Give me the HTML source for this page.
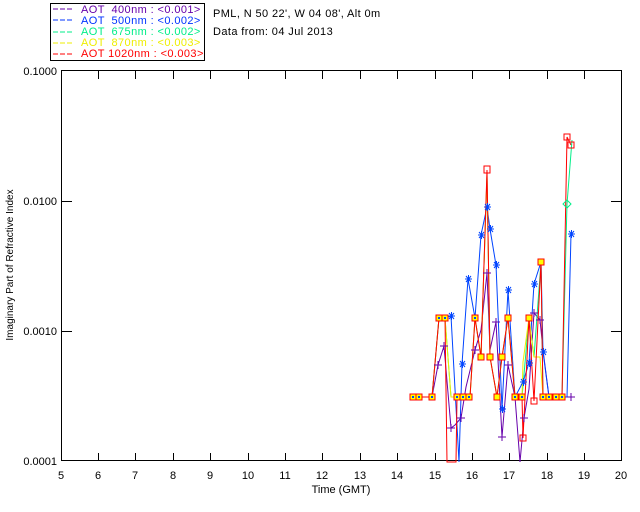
<!DOCTYPE html>
<html><head><style>
html,body{margin:0;padding:0;background:#fff;}
svg{display:block;font-family:"Liberation Sans",sans-serif;}
</style></head><body>
<svg width="640" height="512" viewBox="0 0 640 512" xmlns="http://www.w3.org/2000/svg">
<rect width="640" height="512" fill="#fff"/>
<rect x="50.5" y="3.5" width="154" height="57" fill="none" stroke="#000"/>
<g font-size="11" letter-spacing="0.4">
<line x1="53" y1="9" x2="74" y2="9" stroke="#6600aa" stroke-dasharray="5,2"/>
<text x="81" y="13" fill="#6600aa" xml:space="preserve">AOT  400nm : &lt;0.001&gt;</text>
<line x1="53" y1="20" x2="74" y2="20" stroke="#0033ff" stroke-dasharray="5,2"/>
<text x="81" y="24" fill="#0033ff" xml:space="preserve">AOT  500nm : &lt;0.002&gt;</text>
<line x1="53" y1="32" x2="74" y2="32" stroke="#00ee88" stroke-dasharray="5,2"/>
<text x="81" y="35" fill="#00ee88" xml:space="preserve">AOT  675nm : &lt;0.002&gt;</text>
<line x1="53" y1="43" x2="74" y2="43" stroke="#eeee00" stroke-dasharray="5,2"/>
<text x="81" y="46" fill="#eeee00" xml:space="preserve">AOT  870nm : &lt;0.003&gt;</text>
<line x1="53" y1="54" x2="74" y2="54" stroke="#ff0000" stroke-dasharray="5,2"/>
<text x="81" y="57" fill="#ff0000" xml:space="preserve">AOT 1020nm : &lt;0.003&gt;</text>
<text x="213" y="17" fill="#000">PML, N 50 22', W 04 08', Alt 0m</text>
<text x="213" y="35" fill="#000">Data from: 04 Jul 2013</text>
</g>
<rect x="61.5" y="70.5" width="560" height="390" fill="none" stroke="#000"/>
<g stroke="#000">
<line x1="98.5" y1="461" x2="98.5" y2="453"/><line x1="135.5" y1="461" x2="135.5" y2="453"/>
<line x1="173.5" y1="461" x2="173.5" y2="453"/><line x1="210.5" y1="461" x2="210.5" y2="453"/>
<line x1="248.5" y1="461" x2="248.5" y2="453"/><line x1="285.5" y1="461" x2="285.5" y2="453"/>
<line x1="322.5" y1="461" x2="322.5" y2="453"/><line x1="360.5" y1="461" x2="360.5" y2="453"/>
<line x1="397.5" y1="461" x2="397.5" y2="453"/><line x1="435.5" y1="461" x2="435.5" y2="453"/>
<line x1="472.5" y1="461" x2="472.5" y2="453"/><line x1="509.5" y1="461" x2="509.5" y2="453"/>
<line x1="547.5" y1="461" x2="547.5" y2="453"/><line x1="584.5" y1="461" x2="584.5" y2="453"/>
<line x1="98.5" y1="71" x2="98.5" y2="79"/><line x1="135.5" y1="71" x2="135.5" y2="79"/>
<line x1="173.5" y1="71" x2="173.5" y2="79"/><line x1="210.5" y1="71" x2="210.5" y2="79"/>
<line x1="248.5" y1="71" x2="248.5" y2="79"/><line x1="285.5" y1="71" x2="285.5" y2="79"/>
<line x1="322.5" y1="71" x2="322.5" y2="79"/><line x1="360.5" y1="71" x2="360.5" y2="79"/>
<line x1="397.5" y1="71" x2="397.5" y2="79"/><line x1="435.5" y1="71" x2="435.5" y2="79"/>
<line x1="472.5" y1="71" x2="472.5" y2="79"/><line x1="509.5" y1="71" x2="509.5" y2="79"/>
<line x1="547.5" y1="71" x2="547.5" y2="79"/><line x1="584.5" y1="71" x2="584.5" y2="79"/>
<line x1="61" y1="201.5" x2="72" y2="201.5"/><line x1="61" y1="331.5" x2="72" y2="331.5"/>
<line x1="611" y1="201.5" x2="622" y2="201.5"/><line x1="611" y1="331.5" x2="622" y2="331.5"/>
</g>
<g font-size="11" fill="#000">
<text x="57" y="75" text-anchor="end">0.1000</text>
<text x="57" y="205" text-anchor="end">0.0100</text>
<text x="57" y="335" text-anchor="end">0.0010</text>
<text x="57" y="465" text-anchor="end">0.0001</text>
<g text-anchor="middle">
<text x="61" y="479">5</text><text x="98" y="479">6</text><text x="135" y="479">7</text><text x="173" y="479">8</text>
<text x="210" y="479">9</text><text x="248" y="479">10</text><text x="285" y="479">11</text><text x="322" y="479">12</text>
<text x="360" y="479">13</text><text x="397" y="479">14</text><text x="435" y="479">15</text><text x="472" y="479">16</text>
<text x="509" y="479">17</text><text x="547" y="479">18</text><text x="584" y="479">19</text><text x="621" y="479">20</text>
<text x="341" y="493">Time (GMT)</text>
</g>
<text transform="translate(13,265) rotate(-90)" text-anchor="middle" font-size="10">Imaginary Part of Refractive Index</text>
</g>
<g fill="none" stroke-width="1">
<polyline stroke="#6600aa" points="413,397 419,397 432,397 438,365 444,346 451,428 455,425 461,418 466,387 475,350 481,330 487,273 490,350 496,322 502,437 508,365 515,397 520,462 524,418 529,389 534,313 540,320 543,350 549,397 571,397"/>
<polyline stroke="#0044ff" points="413,397 419,397 432,397 439,318 445,318 451,316 459,462 462,364 468,279 475,318 481,235 487,207 490,229 496,265 502,409 508,290 515,397 523,382 529,363 534,284 541,262 543,352 549,397 567,397 571,234"/>
<polyline stroke="#00ee88" points="413,397 419,397 432,397 439,318 445,318 451,397 457,397 470,397 475,318 481,357 487,175 490,357 497,397 502,357 508,318 515,397 522,397 529,318 534,357 541,262 543,397 562,397 567,204 572,140"/>
<polyline stroke="#eeee00" points="413,397 419,397 432,397 439,318 445,318 451,397 457,397 470,397 475,318 481,357 487,175 490,357 497,397 502,357 508,318 515,397 522,397 523,362 529,318 534,357 540,357 543,397 562,397"/>
<polyline stroke="#ff0000" points="413,397 419,397 432,397 439,318 445,318 447,462 456,462 457,397 470,397 475,318 481,357 487,170 490,357 497,397 502,357 508,318 515,397 522,397 523,438 529,318 534,401 541,262 543,397 562,397 567,137 571,145"/>
</g>
<g fill="#ffff00" stroke="#ff0000" stroke-width="1">
<rect x="410" y="394" width="6" height="6"/><rect x="416" y="394" width="6" height="6"/><rect x="429" y="394" width="6" height="6"/>
<rect x="436" y="315" width="6" height="6"/><rect x="442" y="315" width="6" height="6"/>
<rect x="454" y="394" width="6" height="6"/><rect x="460" y="394" width="6" height="6"/><rect x="466" y="394" width="6" height="6"/>
<rect x="472" y="315" width="6" height="6"/><rect x="478" y="354" width="6" height="6"/><rect x="484" y="166" width="6" height="7" fill="none"/>
<rect x="487" y="354" width="6" height="6"/><rect x="494" y="394" width="6" height="6"/><rect x="499" y="354" width="6" height="6"/>
<rect x="505" y="315" width="6" height="6"/><rect x="512" y="394" width="6" height="6"/><rect x="519" y="394" width="6" height="6"/>
<rect x="520" y="435" width="6" height="6" fill="none"/><rect x="526" y="315" width="6" height="6"/><rect x="531" y="398" width="6" height="6" fill="none"/>
<rect x="538" y="259" width="6" height="6"/><rect x="540" y="394" width="6" height="6"/><rect x="546" y="394" width="6" height="6"/>
<rect x="553" y="394" width="6" height="6"/><rect x="559" y="394" width="6" height="6"/>
<rect x="564" y="134" width="6" height="6" fill="none"/><rect x="568" y="142" width="6" height="6" fill="none"/>
</g>
<g fill="#0044ff">
<rect x="412" y="396" width="2" height="2"/><rect x="418" y="396" width="2" height="2"/><rect x="431" y="396" width="2" height="2"/>
<rect x="438" y="317" width="2" height="2"/><rect x="444" y="317" width="2" height="2"/>
<rect x="456" y="396" width="2" height="2"/><rect x="462" y="396" width="2" height="2"/><rect x="468" y="396" width="2" height="2"/>
<rect x="474" y="317" width="2" height="2"/><rect x="514" y="396" width="2" height="2"/><rect x="521" y="396" width="2" height="2"/>
<rect x="542" y="396" width="2" height="2"/><rect x="548" y="396" width="2" height="2"/><rect x="555" y="396" width="2" height="2"/><rect x="561" y="396" width="2" height="2"/>
</g>
<g stroke="#0044ff" stroke-width="1">
<path d="M448 316h7M451.5 312v8M449 313l5 6M454 313l-5 6"/>
<path d="M459 364h7M462.5 360v8M460 361l5 6M465 361l-5 6"/>
<path d="M465 279h7M468.5 275v8M466 276l5 6M471 276l-5 6"/>
<path d="M478 235h7M481.5 231v8M479 232l5 6M484 232l-5 6"/>
<path d="M484 207h7M487.5 203v8M485 204l5 6M490 204l-5 6"/>
<path d="M487 229h7M490.5 225v8M488 226l5 6M493 226l-5 6"/>
<path d="M493 265h7M496.5 261v8M494 262l5 6M499 262l-5 6"/>
<path d="M499 409h7M502.5 405v8M500 406l5 6M505 406l-5 6"/>
<path d="M505 290h7M508.5 286v8M506 287l5 6M511 287l-5 6"/>
<path d="M520 382h7M523.5 378v8M521 379l5 6M526 379l-5 6"/>
<path d="M526 363h7M529.5 359v8M527 360l5 6M532 360l-5 6"/>
<path d="M531 284h7M534.5 280v8M532 281l5 6M537 281l-5 6"/>
<path d="M540 352h7M543.5 348v8M541 349l5 6M546 349l-5 6"/>
<path d="M568 234h7M571.5 230v8M569 231l5 6M574 231l-5 6"/>
</g>
<g stroke="#6600aa" stroke-width="1">
<path d="M434 365h8M438 361v8M440 346h8M444 342v8M447 428h8M451 424v8M457 418h8M461 414v8M471 350h8M475 346v8M483 273h8M487 269v8M492 322h8M496 318v8M498 437h8M502 433v8M504 365h8M508 361v8M520 418h8M524 414v8M530 313h8M534 309v8M536 320h8M540 316v8M567 397h8M571 393v8"/>
</g>
<path d="M567 200l4 4l-4 4l-4-4z" fill="none" stroke="#00ee88"/>
</svg>
</body></html>
